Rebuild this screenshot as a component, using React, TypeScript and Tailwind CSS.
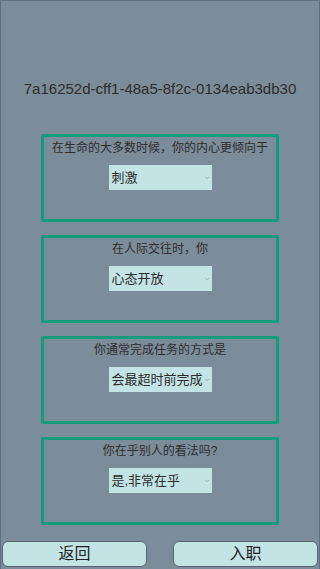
import { ChevronDown } from "lucide-react";

const questions = [
  { q: "在生命的大多数时候，你的内心更倾向于", a: "刺激" },
  { q: "在人际交往时，你", a: "心态开放" },
  { q: "你通常完成任务的方式是", a: "会最超时前完成" },
  { q: "你在乎别人的看法吗?", a: "是,非常在乎" },
];

const font = { fontFamily: '"Liberation Sans", "Noto Sans CJK SC", sans-serif' };

function QuestionCard({ q, a }: { q: string; a: string }) {
  return (
    <div className="flex h-[88px] w-[238px] flex-col items-center rounded-[2px] border-[3px] border-[#129e7e] pt-[3px]">
      <p className="whitespace-nowrap text-[12px] leading-[17px] text-[#2e2e2e]">{q}</p>
      <div className="mt-[8px] flex h-[25px] w-[103px] items-center justify-between bg-[#c3e3e5] pl-[3px] pr-[2px]">
        <span className="text-[13px] leading-none text-[#2b2b2b]">{a}</span>
        <ChevronDown className="h-[6px] w-[6px] text-[#8a9a9c]" strokeWidth={3} />
      </div>
    </div>
  );
}

export default function App() {
  return (
    <div
      style={font}
      className="flex h-[569px] w-[320px] flex-col items-center border-l border-r border-t border-[#5f7082] bg-[#7b8c9a]"
    >
      <h1 className="mt-[79px] whitespace-nowrap text-[15px] leading-[18px] text-[#2d2d2d]">
        7a16252d-cff1-48a5-8f2c-0134eab3db30
      </h1>
      <div className="mt-[36px] flex flex-col gap-[13px]">
        {questions.map((item) => (
          <QuestionCard key={item.q} q={item.q} a={item.a} />
        ))}
      </div>
      <div className="mt-auto mb-[2px] flex w-full justify-between px-[1px]">
        <button
          type="button"
          className="flex h-[26px] w-[145px] items-center justify-center rounded-[6px] border border-[#59636e] bg-[#c3e3e5] text-[16px] text-[#222]"
        >
          返回
        </button>
        <button
          type="button"
          className="flex h-[26px] w-[145px] items-center justify-center rounded-[6px] border border-[#59636e] bg-[#c3e3e5] text-[16px] text-[#222]"
        >
          入职
        </button>
      </div>
    </div>
  );
}
